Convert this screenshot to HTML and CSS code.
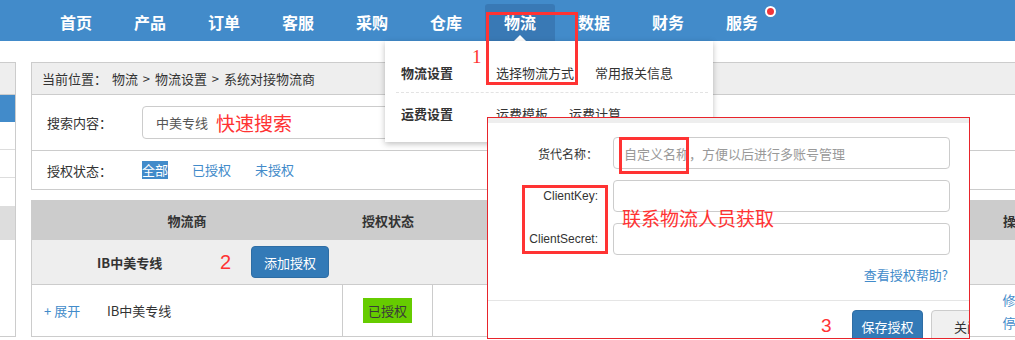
FILE: index.html
```html
<!DOCTYPE html>
<html lang="zh-CN">

<head>
    <meta charset="UTF-8">
    <title>系统对接物流商</title>
    <link rel="stylesheet" href="styles.css">
</head>

<body>
    <div class="topnav">
        <ul class="nav-list">
            <li>首页</li>
            <li>产品</li>
            <li>订单</li>
            <li>客服</li>
            <li>采购</li>
            <li>仓库</li>
            <li class="active">物流</li>
            <li>数据</li>
            <li>财务</li>
            <li>服务<span class="dot"></span></li>
        </ul>
    </div>

    <div class="page">
        <div class="sidebar">
            <div class="side-head"></div>
            <div class="side-item on"></div>
            <div class="side-item"></div>
            <div class="side-item"></div>
            <div class="side-item last"></div>
            <div class="side-foot"></div>
        </div>

        <div class="main">
            <div class="panel">
                <div class="crumb">当前位置： 物流 &gt; 物流设置 &gt; 系统对接物流商</div>
                <div class="search-row">
                    <span class="row-label">搜索内容：</span>
                    <div class="search-input">
                        <span class="search-text">中美专线</span>
                        <span class="note-red">快速搜索</span>
                    </div>
                </div>
                <div class="filter-row">
                    <span class="row-label">授权状态：</span>
                    <a class="filter on">全部</a>
                    <a class="filter">已授权</a>
                    <a class="filter">未授权</a>
                </div>
            </div>

            <table class="grid">
                <colgroup>
                    <col style="width: 312px">
                    <col style="width: 90px">
                    <col style="width: 261px">
                    <col style="width: 261px">
                    <col style="width: 122px">
                </colgroup>
                <thead>
                    <tr>
                        <th>物流商</th>
                        <th>授权状态</th>
                        <th>账号名称</th>
                        <th>授权时间</th>
                        <th>操作</th>
                    </tr>
                </thead>
                <tbody>
                    <tr class="group">
                        <td colspan="5">
                            <div class="group-inner">
                                <span class="group-name">IB中美专线</span>
                                <span class="step-num">2</span>
                                <button class="btn btn-primary">添加授权</button>
                            </div>
                        </td>
                    </tr>
                    <tr class="row">
                        <td class="first">
                            <span class="expand">+ 展开</span><span>IB中美专线</span>
                        </td>
                        <td class="center"><span class="badge">已授权</span></td>
                        <td></td>
                        <td></td>
                        <td class="center ops"><a>修改</a><a>停用</a></td>
                    </tr>
                </tbody>
            </table>
        </div>
    </div>

    <!-- 物流下拉菜单 -->
    <div class="dropdown">
        <div class="menu-row">
            <span class="menu-title">物流设置</span>
            <a class="menu-link">选择物流方式</a>
            <a class="menu-link">常用报关信息</a>
        </div>
        <div class="menu-line"></div>
        <div class="menu-row">
            <span class="menu-title">运费设置</span>
            <a class="menu-link">运费模板</a>
            <a class="menu-link">运费计算</a>
        </div>
    </div>

    <!-- 授权弹窗 -->
    <div class="modal">
        <div class="modal-top"></div>
        <div class="modal-body">
            <div class="form-row">
                <label>货代名称：</label>
                <div class="field"><span class="placeholder">自定义名称，方便以后进行多账号管理</span></div>
            </div>
            <div class="form-row">
                <label>ClientKey:</label>
                <div class="field"></div>
            </div>
            <div class="form-row">
                <label>ClientSecret:</label>
                <div class="field"></div>
            </div>
            <div class="help">查看授权帮助?</div>
        </div>
        <div class="modal-foot">
            <span class="step-num foot-num">3</span>
            <button class="btn btn-primary">保存授权</button>
            <button class="btn btn-default">关闭</button>
        </div>
        <span class="note-red modal-note">联系物流人员获取</span>
    </div>

    <!-- 标注 -->
    <span class="step-one">1</span>
    <div class="mark mark-nav"></div>
    <div class="mark mark-name"></div>
    <div class="mark mark-keys"></div>
</body>

</html>
```

FILE: styles.css
```css
* {
    box-sizing: border-box;
}

body {
    margin: 0;
    position: relative;
    width: 1015px;
    height: 340px;
    overflow: hidden;
    background: #fff;
    color: #333;
    font-family: "Noto Sans CJK SC", "Liberation Sans", sans-serif;
    font-size: 13px;
}

a {
    cursor: pointer;
}

/* 顶部导航 */
.topnav {
    height: 41px;
    background: #428bca;
}

.nav-list {
    display: flex;
    margin: 0;
    padding: 4px 0 0 39px;
    list-style: none;
}

.nav-list li {
    position: relative;
    width: 70px;
    height: 37px;
    margin: 0 2px;
    line-height: 37px;
    text-align: center;
    color: #fff;
    font-size: 16px;
    font-weight: bold;
    border-radius: 3px 3px 0 0;
}

.nav-list li.active {
    background: #3979b5;
}

.nav-list li.active::after {
    content: "";
    position: absolute;
    left: 50%;
    bottom: 0;
    margin-left: -6px;
    border: 6px solid transparent;
    border-top: 0;
    border-bottom-color: #fff;
}

.dot {
    position: absolute;
    left: 58px;
    top: 2px;
    width: 11px;
    height: 11px;
    border: 2px solid #fff;
    border-radius: 50%;
    background: #f0353a;
}

/* 页面 */
.page {
    display: flex;
    padding-top: 21px;
}

.sidebar {
    width: 16px;
    flex: none;
    border: 1px solid #ccc;
    border-left: 0;
}

.side-head {
    height: 32px;
    background: #eee;
    border-bottom: 1px solid #ccc;
}

.side-item {
    height: 28px;
    border-bottom: 1px solid #ddd;
}

.side-item.on {
    height: 27px;
    background: #428bca;
    border-bottom: 0;
}

.side-item.last {
    border-bottom: 0;
}

.side-foot {
    height: 34px;
    background: #ddd;
}

.main {
    width: 1046px;
    flex: none;
    margin-left: 15px;
}

.panel {
    border: 1px solid #ccc;
    border-right: 0;
}

.crumb {
    height: 32px;
    padding-left: 10px;
    line-height: 31px;
    background: #eee;
    border-bottom: 1px solid #ccc;
    word-spacing: 2px;
}

.search-row {
    display: flex;
    align-items: center;
    height: 56px;
    border-bottom: 1px solid #ccc;
}

.row-label {
    width: 110px;
    padding-left: 15px;
    flex: none;
}

.search-input {
    display: flex;
    align-items: center;
    width: 500px;
    height: 33px;
    padding-left: 13px;
    border: 1px solid #ccc;
    border-radius: 4px;
}

.search-text {
    color: #555;
}

.note-red {
    color: #f33;
    font-size: 19px;
    line-height: 24px;
}

.search-input .note-red {
    margin-left: 8px;
}

.filter-row {
    display: flex;
    align-items: center;
    height: 38px;
}

.filter {
    margin-right: 24px;
    color: #428bca;
    line-height: 18px;
}

.filter.on {
    color: #fff;
    background: #428bca;
}

/* 表格 */
.grid {
    width: 1046px;
    margin-top: 10px;
    border-collapse: separate;
    border-spacing: 0;
    table-layout: fixed;
}

.grid th {
    height: 40px;
    padding: 0;
    background: #ccc;
    font-weight: bold;
}

.group td {
    height: 45px;
    padding: 0 0 0 65px;
    background: #eee;
    border-left: 1px solid #ccc;
    border-bottom: 1px solid #ccc;
}

.group-inner {
    display: flex;
    align-items: center;
}

.group-name {
    width: 123px;
    font-weight: bold;
}

.step-num {
    color: #f33;
    font-family: "Liberation Sans", sans-serif;
    font-size: 20px;
}

.group-inner .step-num {
    width: 31px;
}

.row td {
    height: 52px;
    padding: 0;
    border-right: 1px solid #ccc;
    border-bottom: 1px solid #ccc;
}

.row td.first {
    padding-left: 12px;
    border-left: 1px solid #ccc;
}

.expand {
    display: inline-block;
    width: 63px;
    color: #428bca;
}

.center {
    text-align: center;
}

.badge {
    display: inline-block;
    padding: 0 5px;
    line-height: 25px;
    background: #66cc00;
    color: #3a3a3a;
}

.ops a {
    display: block;
    line-height: 23px;
    color: #428bca;
}

.btn {
    height: 32px;
    padding: 0 12px;
    border-radius: 4px;
    font-family: inherit;
    font-size: 13px;
    white-space: nowrap;
    cursor: pointer;
}

.btn-primary {
    width: 78px;
    color: #fff;
    background: #337ab7;
    border: 1px solid #2e6da4;
}

.btn-default {
    width: 60px;
    color: #333;
    background: #f0f0f0;
    border: 1px solid #ccc;
    text-align: left;
    padding-left: 22px;
}

/* 下拉菜单 */
.dropdown {
    position: absolute;
    left: 385px;
    top: 41px;
    width: 328px;
    height: 101px;
    padding-top: 11px;
    background: #fff;
    box-shadow: 0 2px 6px rgba(0, 0, 0, 0.25);
}

.menu-row {
    display: flex;
    align-items: center;
    height: 40px;
    padding-left: 16px;
}

.menu-title {
    width: 95px;
    font-weight: bold;
}

.menu-link {
    margin-right: 21px;
    color: #333;
}

.menu-line {
    margin: 0 5px 0 11px;
    border-top: 1px dashed #e3e3e3;
}

/* 弹窗 */
.modal {
    position: absolute;
    left: 487px;
    top: 117px;
    width: 483px;
    height: 222px;
    overflow: hidden;
    background: #fff;
    border: 1px solid #e8242b;
}

.modal-top {
    height: 5px;
    background: #eee;
}

.modal-body {
    padding-top: 14px;
}

.form-row {
    display: flex;
    align-items: center;
    height: 32px;
    margin-bottom: 11px;
}

.form-row:last-of-type {
    margin-bottom: 0;
}

.form-row label {
    width: 110px;
    margin-right: 15px;
    text-align: right;
    font-family: "Liberation Sans", "Noto Sans CJK SC", sans-serif;
    font-size: 12px;
}

.field {
    display: flex;
    align-items: center;
    width: 337px;
    height: 32px;
    padding-left: 10px;
    border: 1px solid #ccc;
    border-radius: 4px;
}

.placeholder {
    color: #999;
}

.help {
    margin-top: 10px;
    padding-right: 21px;
    line-height: 18px;
    text-align: right;
    color: #428bca;
}

.modal-foot {
    display: flex;
    align-items: flex-start;
    margin-top: 16px;
    padding: 9px 0 0 333px;
    border-top: 1px solid #e5e5e5;
}

.foot-num {
    width: 31px;
    flex: none;
    font-size: 19px;
    line-height: 32px;
}

.modal-foot .btn-primary {
    width: 71px;
    padding: 0;
    flex: none;
}

.modal-foot .btn-default {
    margin-left: 8px;
    flex: none;
}

.modal-note {
    position: absolute;
    left: 134px;
    top: 88px;
}

/* 红色标注 */
.step-one {
    position: absolute;
    left: 472px;
    top: 46px;
    color: #f33;
    font-family: "Liberation Serif", serif;
    font-size: 19px;
}

.mark {
    position: absolute;
    border: 3px solid #f33;
}

.mark-nav {
    left: 486px;
    top: 12px;
    width: 92px;
    height: 73px;
}

.mark-name {
    left: 619px;
    top: 137px;
    width: 70px;
    height: 37px;
}

.mark-keys {
    left: 522px;
    top: 185px;
    width: 86px;
    height: 69px;
}
```
